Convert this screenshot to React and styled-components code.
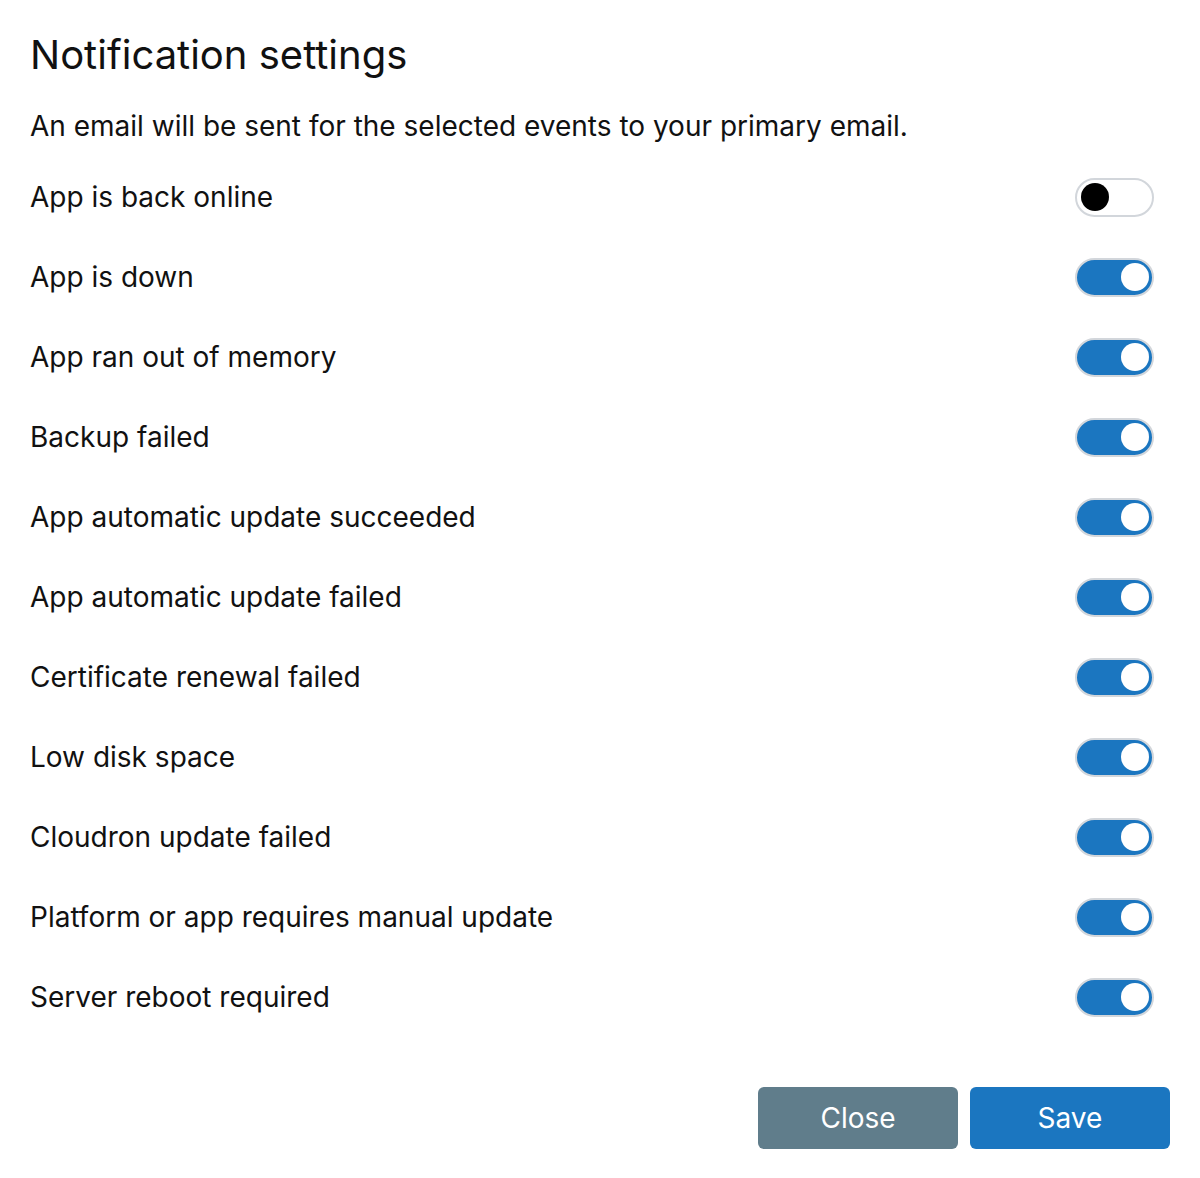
import React, { useState } from "react";
import styled, { createGlobalStyle } from "styled-components";

const Global = createGlobalStyle`
  html, body { margin: 0; padding: 0; background: #fff; }
  body { font-family: Inter, "Noto Sans", "Liberation Sans", sans-serif; color: #111; }
`;

const Dialog = styled.div`
  width: 1200px;
  box-sizing: border-box;
  padding: 31px 30px 29px 30px;
  display: flex;
  flex-direction: column;
`;

const Title = styled.h1`
  margin: 0;
  font-size: 40px;
  font-weight: 400;
  line-height: 48px;
  color: #111;
`;

const Description = styled.p`
  margin: 27px 0 11px;
  font-size: 28px;
  line-height: 40px;
  color: #111;
`;

const List = styled.div`
  display: flex;
  flex-direction: column;
  padding-right: 16px;
`;

const Row = styled.label`
  display: flex;
  align-items: center;
  justify-content: space-between;
  height: 80px;
  font-size: 28px;
  color: #111;
  cursor: pointer;
`;

const Track = styled.button`
  position: relative;
  width: 79px;
  height: 39px;
  box-sizing: border-box;
  border-radius: 20px;
  border: 2px solid #d2d6db;
  background: ${(p) => (p.$on ? "#1b76c0" : "#fff")};
  padding: 0;
  cursor: pointer;
  flex-shrink: 0;
`;

const Knob = styled.span`
  position: absolute;
  top: 3.5px;
  left: ${(p) => (p.$on ? "44px" : "4px")};
  width: 28px;
  height: 28px;
  border-radius: 50%;
  background: ${(p) => (p.$on ? "#fff" : "#000")};
`;

const Footer = styled.div`
  display: flex;
  justify-content: flex-end;
  gap: 12px;
  margin-top: 50px;
`;

const Button = styled.button`
  width: 200px;
  height: 62px;
  border: none;
  border-radius: 6px;
  font-family: inherit;
  font-size: 28px;
  color: #fff;
  background: ${(p) => (p.$primary ? "#1b76c0" : "#607d8b")};
  cursor: pointer;
`;

const events = [
  ["App is back online", false],
  ["App is down", true],
  ["App ran out of memory", true],
  ["Backup failed", true],
  ["App automatic update succeeded", true],
  ["App automatic update failed", true],
  ["Certificate renewal failed", true],
  ["Low disk space", true],
  ["Cloudron update failed", true],
  ["Platform or app requires manual update", true],
  ["Server reboot required", true],
];

export default function App() {
  const [state, setState] = useState(events.map((e) => e[1]));
  const toggle = (i) => setState((s) => s.map((v, j) => (j === i ? !v : v)));
  return (
    <>
      <Global />
      <Dialog>
        <Title>Notification settings</Title>
        <Description>
          An email will be sent for the selected events to your primary email.
        </Description>
        <List>
          {events.map(([label], i) => (
            <Row key={label}>
              <span>{label}</span>
              <Track $on={state[i]} onClick={() => toggle(i)} aria-label={label}>
                <Knob $on={state[i]} />
              </Track>
            </Row>
          ))}
        </List>
        <Footer>
          <Button>Close</Button>
          <Button $primary>Save</Button>
        </Footer>
      </Dialog>
    </>
  );
}
